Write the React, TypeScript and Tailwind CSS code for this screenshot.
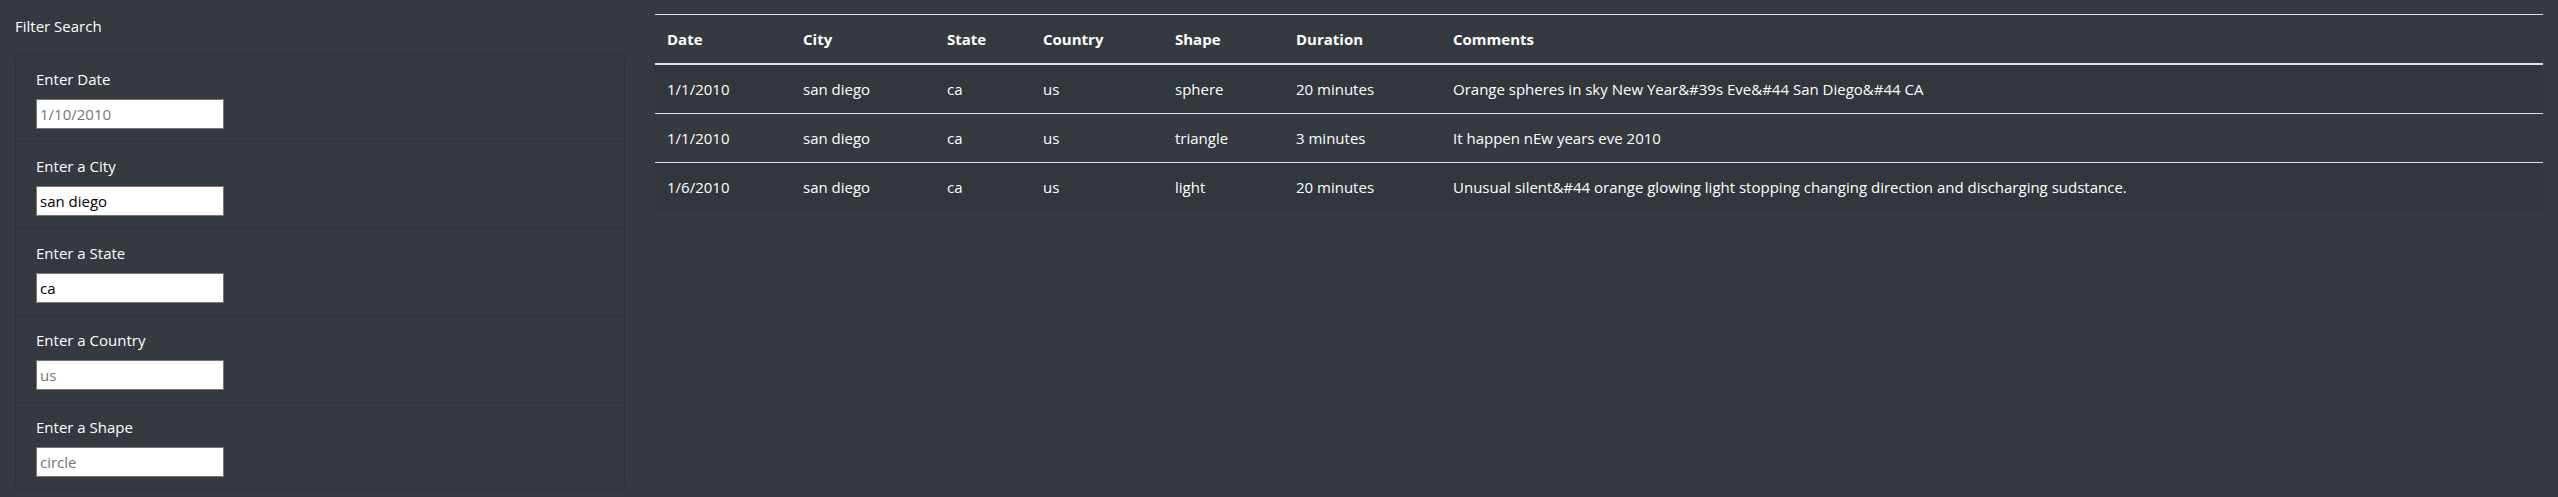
import React from 'react';

const filters = [
  { label: 'Enter Date', value: '', placeholder: '1/10/2010' },
  { label: 'Enter a City', value: 'san diego', placeholder: 'san diego' },
  { label: 'Enter a State', value: 'ca', placeholder: 'ca' },
  { label: 'Enter a Country', value: '', placeholder: 'us' },
  { label: 'Enter a Shape', value: '', placeholder: 'circle' },
];

const sightings = [
  {
    datetime: '1/1/2010',
    city: 'san diego',
    state: 'ca',
    country: 'us',
    shape: 'sphere',
    duration: '20 minutes',
    comments: 'Orange spheres in sky New Year&#39s Eve&#44 San Diego&#44 CA',
  },
  {
    datetime: '1/1/2010',
    city: 'san diego',
    state: 'ca',
    country: 'us',
    shape: 'triangle',
    duration: '3 minutes',
    comments: 'It happen nEw years eve 2010',
  },
  {
    datetime: '1/6/2010',
    city: 'san diego',
    state: 'ca',
    country: 'us',
    shape: 'light',
    duration: '20 minutes',
    comments: 'Unusual silent&#44 orange glowing light stopping changing direction and discharging sudstance.',
  },
];

const columns = [
  { key: 'datetime', title: 'Date', width: 'w-[136px]' },
  { key: 'city', title: 'City', width: 'w-[144px]' },
  { key: 'state', title: 'State', width: 'w-[96px]' },
  { key: 'country', title: 'Country', width: 'w-[132px]' },
  { key: 'shape', title: 'Shape', width: 'w-[121px]' },
  { key: 'duration', title: 'Duration', width: 'w-[157px]' },
  { key: 'comments', title: 'Comments', width: '' },
] as const;

export default function App() {
  return (
    <div className="min-h-[497px] bg-[#343a40] font-['Segoe_UI','Open_Sans',sans-serif] text-[15px] leading-6 text-white">
      <div className="flex gap-[30px] px-[15px] pt-[14px]">
        <aside className="w-[610px] shrink-0">
          <div className="mb-4">Filter Search</div>
          <ul className="rounded border border-black/[.125]">
            {filters.map((f) => (
              <li key={f.label} className="border-b border-black/[.125] px-5 py-3 last:border-b-0">
                <label className="mb-2 block">{f.label}</label>
                <input
                  type="text"
                  defaultValue={f.value}
                  placeholder={f.placeholder}
                  className="block h-[30px] w-[188px] border border-[#767676] bg-white px-[3px] text-black placeholder:text-[#757575]"
                />
              </li>
            ))}
          </ul>
        </aside>

        <main className="min-w-0 flex-1">
          <table className="w-full table-fixed border-collapse text-left">
            <thead>
              <tr>
                {columns.map((c) => (
                  <th
                    key={c.key}
                    className={`${c.width} border-t border-b-2 border-[#dee2e6] p-3 align-bottom font-bold`}
                  >
                    {c.title}
                  </th>
                ))}
              </tr>
            </thead>
            <tbody>
              {sightings.map((s, i) => (
                <tr key={i} className="odd:bg-black/5">
                  {columns.map((c) => (
                    <td key={c.key} className="border-t border-[#dee2e6] p-3 align-top">
                      {s[c.key]}
                    </td>
                  ))}
                </tr>
              ))}
            </tbody>
          </table>
        </main>
      </div>
    </div>
  );
}
